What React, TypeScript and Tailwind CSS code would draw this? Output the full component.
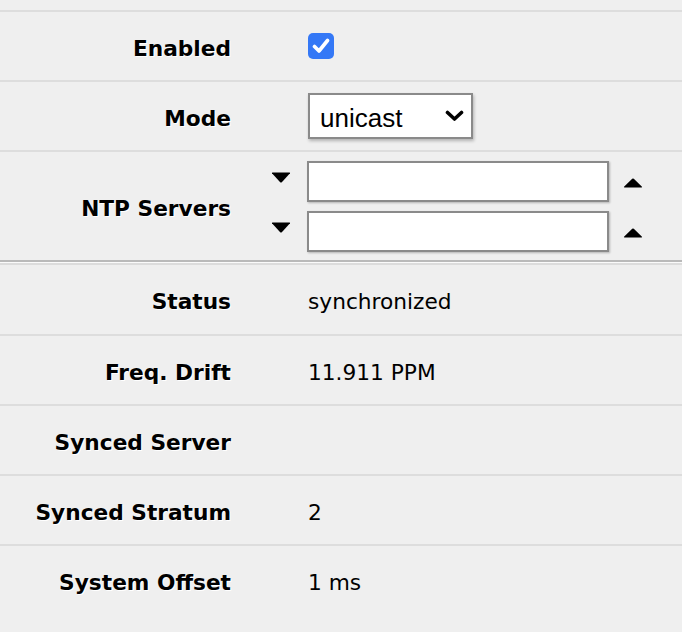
import React from "react";

const font = { fontFamily: '"DejaVu Sans", Verdana, sans-serif' };

function Label({ children }: { children: React.ReactNode }) {
  return (
    <div className="w-[231px] shrink-0 pt-[6px] text-right font-bold text-black [text-shadow:1px_1px_0_#ffffff]">
      {children}
    </div>
  );
}

function DownArrow() {
  return (
    <svg width="20" height="11" viewBox="0 0 20 11" className="block">
      <path d="M1 1.2 Q0.6 0.5 1.6 0.5 L18.4 0.5 Q19.4 0.5 19 1.2 L10.8 10.2 Q10 11 9.2 10.2 Z" fill="#000" />
    </svg>
  );
}

function UpArrow() {
  return (
    <svg width="20" height="10" viewBox="0 0 20 10" className="block">
      <path d="M1 8.8 Q0.6 9.5 1.6 9.5 L18.4 9.5 Q19.4 9.5 19 8.8 L10.8 0.8 Q10 0 9.2 0.8 Z" fill="#000" />
    </svg>
  );
}

function ServerRow() {
  return (
    <div className="flex items-center">
      <div className="w-[20px] flex flex-col items-center mt-[-7px]">
        <DownArrow />
      </div>
      <div className="ml-[16px] w-[302px] h-[41px] border-2 border-[#8a8a8a] bg-white shadow-[1px_1px_2px_rgba(0,0,0,0.25)]" />
      <div className="ml-[14px] w-[20px] mt-[3px]">
        <UpArrow />
      </div>
    </div>
  );
}

export default function App() {
  return (
    <div className="w-[682px] h-[632px] bg-[#efefef] text-[21.7px] text-black overflow-hidden" style={font}>
      <div className="h-[10px]" />
      <div className="border-t-2 border-[#dddddd]">
        {/* Enabled */}
        <div className="h-[70px] flex items-center border-b-2 border-[#dddddd]">
          <Label>Enabled</Label>
          <div className="ml-[77px] w-[26px] h-[26px] rounded-[5px] bg-[#3478f6] flex items-center justify-center">
            <svg width="18" height="16" viewBox="0 0 18 16">
              <path d="M2.5 8.5 L7 13 L15.5 2.5" fill="none" stroke="#fff" strokeWidth="3.6" strokeLinecap="round" strokeLinejoin="round" />
            </svg>
          </div>
        </div>
        {/* Mode */}
        <div className="h-[70px] flex items-center border-b-2 border-[#dddddd]">
          <Label>Mode</Label>
          <div className="ml-[77px] w-[165px] h-[46px] border-2 border-[#8a8a8a] bg-white shadow-[1px_2px_3px_rgba(0,0,0,0.25)] flex items-center justify-between pl-[10px] pr-[7px]">
            <span className="text-[26px] leading-none pt-[3px]" style={{ fontFamily: '"Liberation Sans", Arial, sans-serif' }}>
              unicast
            </span>
            <svg width="19" height="12" viewBox="0 0 19 12">
              <path d="M2.5 2.5 L9.5 9 L16.5 2.5" fill="none" stroke="#000" strokeWidth="3.6" strokeLinecap="round" strokeLinejoin="round" />
            </svg>
          </div>
        </div>
        {/* NTP Servers */}
        <div className="h-[108px] flex items-center">
          <Label>NTP Servers</Label>
          <div className="ml-[40px] flex flex-col gap-[9px]">
            <ServerRow />
            <ServerRow />
          </div>
        </div>
        {/* group separator */}
        <div className="h-[2px] bg-[#bababa]" />
        <div className="h-[1px] bg-[#fbfbfb]" />
        <div className="h-[2px] bg-[#dcdcdc]" />
        {[
          ["Status", "synchronized", "h-[71px] flex items-center border-b-2 border-[#dddddd]"],
          ["Freq. Drift", "11.911 PPM", "h-[70px] flex items-center border-b-2 border-[#dddddd]"],
          ["Synced Server", "", "h-[70px] flex items-center border-b-2 border-[#dddddd]"],
          ["Synced Stratum", "2", "h-[70px] flex items-center border-b-2 border-[#dddddd]"],
          ["System Offset", "1 ms", "h-[68px] flex items-center"],
        ].map(([k, v, cls]) => (
          <div key={k} className={cls}>
            <Label>{k}</Label>
            <div className="ml-[77px] pt-[6px]">{v}</div>
          </div>
        ))}
      </div>
    </div>
  );
}
